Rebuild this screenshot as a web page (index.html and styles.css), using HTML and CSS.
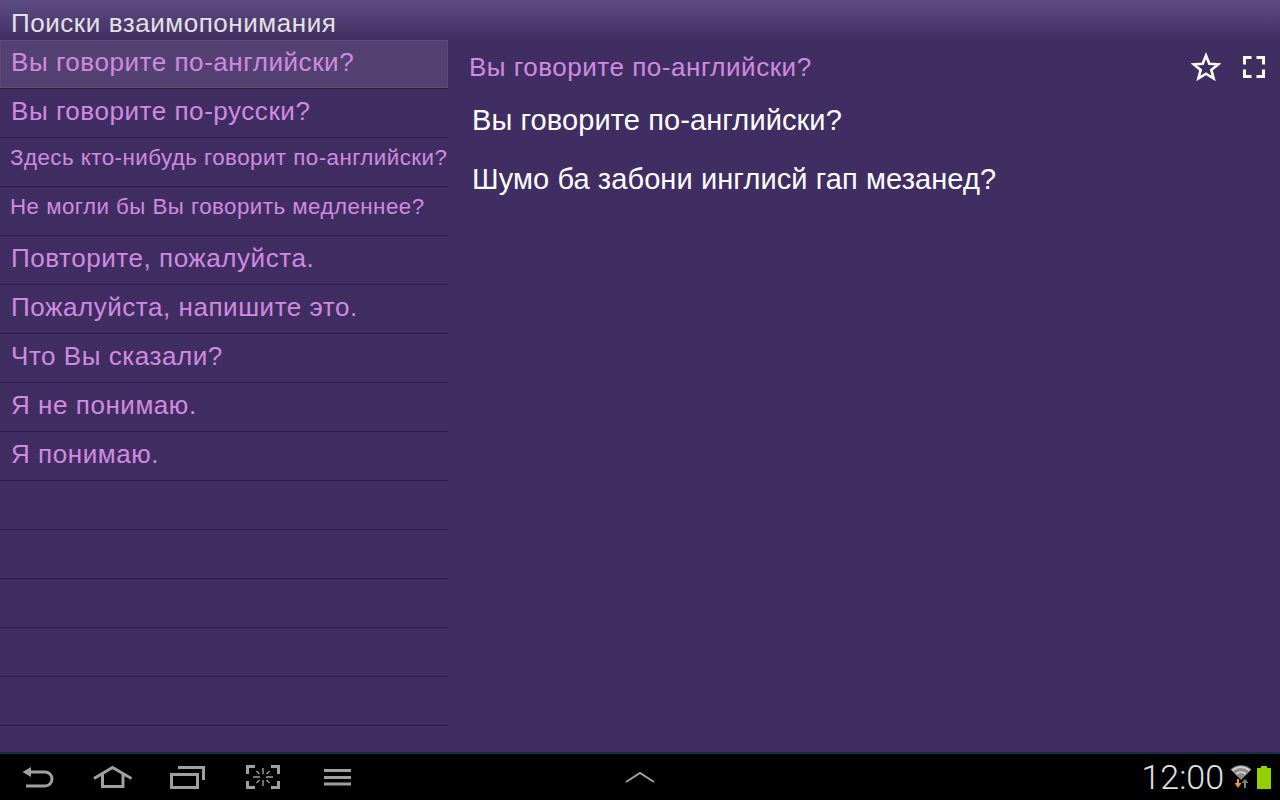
FILE: index.html
```html
<!DOCTYPE html>
<html lang="ru">
<head>
<meta charset="utf-8">
<title>Поиски взаимопонимания</title>
<link rel="stylesheet" href="styles.css">
</head>
<body>
<div class="screen">
  <header class="title">Поиски взаимопонимания</header>
  <main class="content">
    <ul class="list">
      <li class="row selected">Вы говорите по-английски?</li>
      <li class="row">Вы говорите по-русски?</li>
      <li class="row small">Здесь кто-нибудь говорит по-английски?</li>
      <li class="row small">Не могли бы Вы говорить медленнее?</li>
      <li class="row">Повторите, пожалуйста.</li>
      <li class="row">Пожалуйста, напишите это.</li>
      <li class="row">Что Вы сказали?</li>
      <li class="row">Я не понимаю.</li>
      <li class="row">Я понимаю.</li>
      <li class="row"></li>
      <li class="row"></li>
      <li class="row"></li>
      <li class="row"></li>
      <li class="row"></li>
    </ul>
    <section class="detail">
      <div class="detail-head">
        <h1 class="detail-title">Вы говорите по-английски?</h1>
        <svg class="star" width="30" height="30" viewBox="0 0 30 30"><path d="M15 3.500l3.300 8.200 8.900.6-6.900 5.600 2.300 8.600-7.600-4.800-7.600 4.800 2.300-8.600-6.900-5.600 8.900-.6z" fill="none" stroke="#fff" stroke-width="2.600" stroke-linejoin="miter"/></svg>
        <svg class="full" width="22" height="22" viewBox="0 0 22 22"><path d="M1.500 8.500V1.500h7M13.500 1.500h7v7M20.500 13.500v7h-7M8.500 20.500h-7v-7" fill="none" stroke="#fff" stroke-width="3"/></svg>
      </div>
      <p class="phrase">Вы говорите по-английски?</p>
      <p class="phrase second">Шумо ба забони инглисй гап мезанед?</p>
    </section>
  </main>
  <footer class="navbar">
    <div class="nav-left">
      <span class="nav-slot"><svg width="32" height="24" viewBox="0 0 32 24"><path d="M0.500 7L9 2v10z" fill="#a0a0a0"/><path d="M8 7h15a7 7 0 0 1 0 14H4" fill="none" stroke="#a0a0a0" stroke-width="3"/></svg></span>
      <span class="nav-slot"><svg width="40" height="24" viewBox="0 0 40 24"><path d="M1 13.500L19.500 2.500 38.500 13.500M9.500 9.500V21.500H30V9.500" fill="none" stroke="#a0a0a0" stroke-width="3"/></svg></span>
      <span class="nav-slot"><svg width="36" height="24" viewBox="0 0 36 24"><path d="M8 2.500H33.500V15M1.500 9.500h26v13h-26z" fill="none" stroke="#a0a0a0" stroke-width="3"/></svg></span>
      <span class="nav-slot"><svg width="34" height="24" viewBox="0 0 34 24"><path d="M9 1.500H1.500V9M25 1.500H32.500V9M32.500 16V22.500H25M9 22.500H1.500V16" fill="none" stroke="#a0a0a0" stroke-width="3"/><path d="M17 3v6M17 15v6M7 12h7M20 12h7M10.500 6l3 3M23.500 6l-3 3M10.500 18l3-3M23.500 18l-3-3" stroke="#a0a0a0" stroke-width="1.400"/></svg></span>
      <span class="nav-slot"><svg width="27" height="24" viewBox="0 0 27 24"><path d="M0 5.500h27M0 12.500h27M0 19h27" stroke="#a0a0a0" stroke-width="3"/></svg></span>
    </div>
    <svg class="nav-up" width="30" height="12" viewBox="0 0 30 12"><path d="M1 11L15 2l14 9" fill="none" stroke="#a0a0a0" stroke-width="2"/></svg>
    <div class="status">
      <span class="clock">12:00</span>
      <svg class="wifi" width="22" height="24" viewBox="0 0 22 24"><path d="M11 15L0.500 4.500A15 15 0 0 1 21.500 4.500z" fill="#8a8a8a"/><path d="M2.500 5.500a12.500 12.500 0 0 1 17 0M6 9a8 8 0 0 1 10 0" fill="none" stroke="#d0d0d0" stroke-width="1.800"/><path d="M8 14v5" stroke="#f09a20" stroke-width="2"/><path d="M4.500 18h7L8 23z" fill="#f09a20"/><path d="M15 17v6" stroke="#808080" stroke-width="2"/><path d="M11.500 18h7L15 14z" fill="#808080"/></svg>
      <svg class="battery" width="14" height="23" viewBox="0 0 14 23"><path d="M4 0h6v2h4v21H0V2h4z" fill="#92d000"/></svg>
    </div>
  </footer>
</div>
</body>
</html>
```
FILE: styles.css
```css
* { box-sizing: border-box; }
html, body { margin: 0; padding: 0; }
body { width: 1280px; height: 800px; overflow: hidden; background: #402e62; font-family: "Liberation Sans", Arial, sans-serif; }
.screen { width: 1280px; height: 800px; display: flex; flex-direction: column; }
.title { height: 40px; flex: none; padding: 9px 0 0 11px; font-size: 26px; line-height: 28px; letter-spacing: 0.55px; color: #e2e2e2; background: linear-gradient(#5f4c84, #402e62); }
.content { flex: 1; min-height: 0; display: flex; }
.list { width: 448px; flex: none; margin: 0; padding: 0; list-style: none; overflow: hidden; }
.row { height: 49px; padding: 7px 0 0 11px; font-size: 26px; line-height: 30px; letter-spacing: 0.55px; color: #d18ae0; border-bottom: 1px solid #262038; white-space: nowrap; }
.row.small { padding-top: 5px; padding-left: 10px; font-size: 22.300px; letter-spacing: 0.48px; }
.row.selected { background: #534172; box-shadow: inset 0 0 0 1px #5c4a7c; border-bottom-color: #262038; }
.detail { flex: 1; padding: 0 0 0 21px; }
.detail-head { display: flex; align-items: center; height: 54px; padding-right: 15px; }
.detail-title { flex: 1; margin: 0; font-size: 26px; font-weight: normal; letter-spacing: 0.53px; color: #d18ae0; }
.star { margin-right: 22px; }
.phrase { margin: 9px 0 0 3px; font-size: 29px; line-height: 34px; letter-spacing: 0.1px; color: #fff; }
.phrase.second { margin-top: 25px; }
.navbar { height: 48px; flex: none; display: flex; align-items: center; position: relative; background: #000; border-top: 2px solid #122e44; }
.nav-left { display: flex; align-items: center; }
.nav-slot { width: 75px; display: flex; justify-content: center; }
.nav-up { position: absolute; left: 625px; top: 17px; }
.status { margin-left: auto; display: flex; align-items: center; padding-right: 9px; }
.clock { font-family: Roboto, "Liberation Sans", sans-serif; font-weight: 300; font-size: 34px; color: #e0e0e0; margin-right: 6px; }
.wifi { margin-right: 5px; }
```
